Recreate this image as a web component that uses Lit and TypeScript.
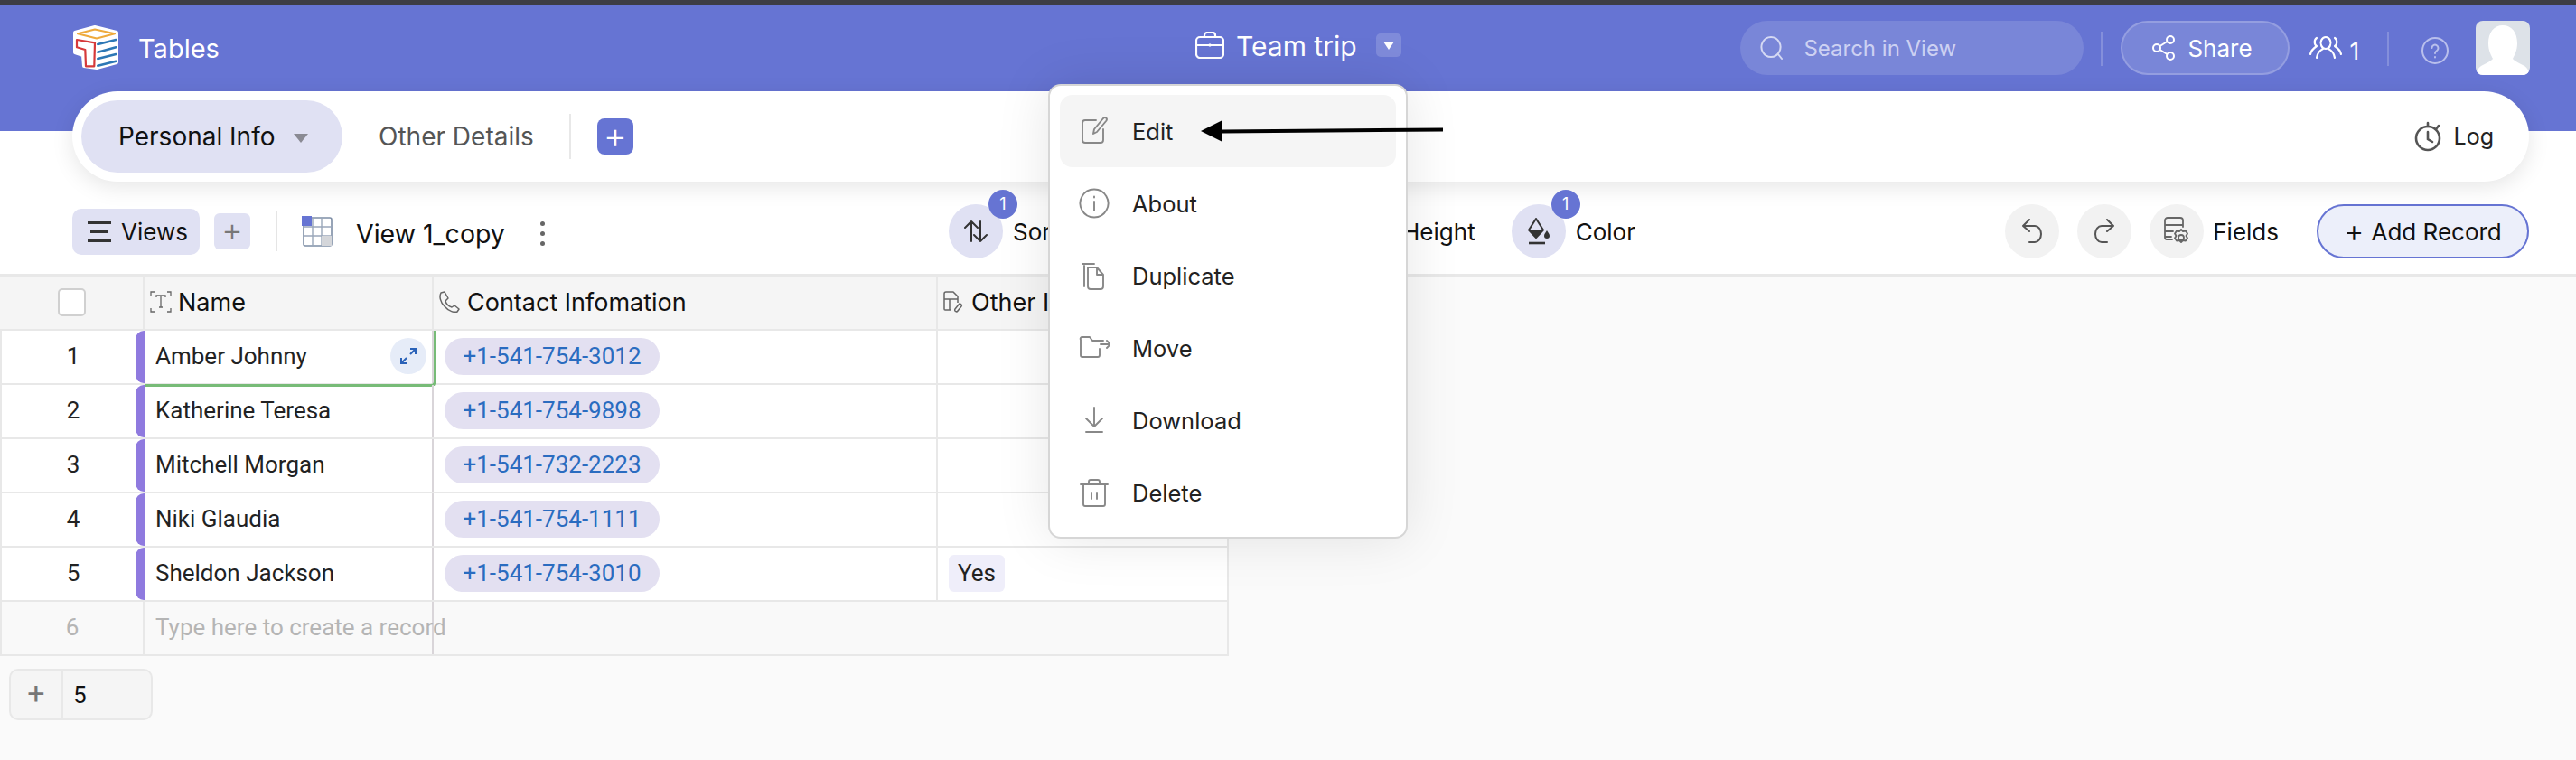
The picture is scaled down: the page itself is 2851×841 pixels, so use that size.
import { LitElement, html, css, svg } from "lit";
import { customElement } from "lit/decorators.js";

const line = (d: string, size = 36) => html`<svg width=${size} height=${size} viewBox="0 0 36 36" fill="none" stroke="currentColor" stroke-width="1.9" stroke-linecap="round" stroke-linejoin="round">${svg`<path d=${d}></path>`}</svg>`;

const MENU = [
  { label: "Edit", d: "M20 6H8a3 3 0 0 0-3 3v19a3 3 0 0 0 3 3h17a3 3 0 0 0 3-3V16M17 21l1-5 10-12c2-2 5 0 3.500 2.500L21 19z", on: true },
  { label: "About", d: "M18 2.500a15.500 15.500 0 1 0 .01 0zM18 10.500v1M18 16v10", on: false },
  { label: "Duplicate", d: "M7 30V7M5 5h13M11 9h10l7 8v13a3 3 0 0 1-3 3H14a3 3 0 0 1-3-3V9zM21 9v8h7", on: false },
  { label: "Move", d: "M3 9a2 2 0 0 1 2-3h8l3 4h12M3 9v17a2 2 0 0 0 2 2h17a2 2 0 0 0 2-2v-7M25 14h11M32 10l4 4-4 4", on: false },
  { label: "Download", d: "M18 4v21M9 16l9 9 9-9M9 31h18", on: false },
  { label: "Delete", d: "M3 9h30M12 8V6a2 2 0 0 1 2-2h8a2 2 0 0 1 2 2v2M6 9v22a2 2 0 0 0 2 2h20a2 2 0 0 0 2-2V9M15 18v7M21 18v7", on: false },
];

const ROWS = [
  { name: "Amber Johnny", phone: "+1-541-754-3012", other: "" },
  { name: "Katherine Teresa", phone: "+1-541-754-9898", other: "" },
  { name: "Mitchell Morgan", phone: "+1-541-732-2223", other: "" },
  { name: "Niki Glaudia", phone: "+1-541-754-1111", other: "" },
  { name: "Sheldon Jackson", phone: "+1-541-754-3010", other: "Yes" },
];

@customElement("app-root")
export class AppRoot extends LitElement {
  private _logo() {
    return html`<svg class="logo" width="52" height="50" viewBox="0 0 52 50" fill="none" stroke-linejoin="round" stroke-linecap="round">
      <path d="M3 8L25 2L49 8V41L27 47L13 45L12 33L3 30Z" fill="#fff" stroke="#fff" stroke-width="4"></path>
      <path d="M6 9.3L25 4.5L47 9.3L27 14.5Z" stroke="#eeaa3c" stroke-width="2.2"></path>
      <path d="M5 16L25 19.3L24.3 45.3L15 45.3L14.3 27L5 24.3Z" stroke="#d6393a" stroke-width="2.2"></path>
      <path d="M28.3 21L48.3 16M28.3 29.7L48.3 24.3M28.3 37L48.3 32M28.3 44.7L48.3 39.7" stroke="#2c77b5" stroke-width="2.6"></path>
    </svg>`;
  }

  private _header() {
    return html`<header class="header">
      <div class="brand">${this._logo()}<span>Tables</span></div>
      <div class="title">
        <svg width="32" height="30" viewBox="0 0 32 30" fill="none" stroke="#fff" stroke-width="2.2" stroke-linejoin="round">
          <rect x="1" y="6" width="30" height="23" rx="4"></rect>
          <path d="M10 6V4a3 3 0 0 1 3-3h6a3 3 0 0 1 3 3v2M1 15h30M16 13.5v3"></path>
        </svg>
        <span>Team trip</span>
        <div class="title-caret"><i></i></div>
      </div>
      <div class="head-right">
        <div class="search">
          <svg width="26" height="28" viewBox="0 0 26 28" fill="none" stroke="#d5d9f3" stroke-width="2" stroke-linecap="round">
            <path d="M12 2a10.5 11 0 1 0 .01 0zM20 21l4 5"></path>
          </svg>
          <span>Search in View</span>
        </div>
        <div class="vline"></div>
        <div class="share">
          <svg width="26" height="28" viewBox="0 0 26 28" fill="none" stroke="#fff" stroke-width="2">
            <circle cx="5" cy="14" r="4"></circle><circle cx="20" cy="5" r="4"></circle><circle cx="20" cy="23" r="4"></circle>
            <path d="M8.5 12l8-5M8.5 16l8 5"></path>
          </svg>
          <span>Share</span>
        </div>
        <div class="people">
          <svg width="38" height="30" viewBox="0 0 38 30" fill="none" stroke="#fff" stroke-width="2.2" stroke-linecap="round" stroke-linejoin="round">
            <path d="M19 3a5.5 6.5 0 1 0 .01 0zM9 26c1-7 5-9 7-10M29 26c-1-7-5-9-7-10M9 4a4 5 0 0 0 0 9c-3 2-6 4-7 9M29 4a4 5 0 0 1 0 9c3 2 6 4 7 9"></path>
          </svg>
          <span>1</span>
        </div>
        <div class="vline gap-line"></div>
        <svg class="help" width="30" height="30" viewBox="0 0 30 30" fill="none" stroke="#b9bfec" stroke-width="2" stroke-linecap="round">
          <circle cx="15" cy="15" r="14"></circle>
          <path d="M11.5 12a3.5 3.5 0 1 1 5.500 3c-1.500 1-2 1.500-2 3M15 22v.5"></path>
        </svg>
        <div class="avatar">
          <svg width="60" height="60" viewBox="0 0 60 60" fill="#fff">
            <path d="M30 5c10 0 16 8 16 20 0 8-3 13-5 17 2 3 8 5 13 8 3 2 5 5 6 10H0c1-5 3-8 6-10 5-3 11-5 13-8-2-4-5-9-5-17C14 13 20 5 30 5z"></path>
          </svg>
        </div>
      </div>
    </header>`;
  }

  private _tabs() {
    return html`<nav class="tabs">
      <div class="tab active"><span>Personal Info</span><i class="caret"></i></div>
      <div class="tab">Other Details</div>
      <div class="vline tab-line"></div>
      <div class="tab-add">+</div>
      <div class="log">
        <svg width="32" height="34" viewBox="0 0 32 34" fill="none" stroke="#555" stroke-width="2.6" stroke-linecap="round">
          <circle cx="15" cy="19" r="13"></circle>
          <path d="M15 12v8l5 3M15 2v4M27 5l-3 4"></path>
        </svg>
        <span>Log</span>
      </div>
    </nav>`;
  }

  private _toolbar() {
    return html`<div class="toolbar">
      <div class="tool-left">
        <div class="views"><span class="burger"><i></i><i></i><i></i></span><span>Views</span></div>
        <div class="view-add">+</div>
        <div class="vline view-line"></div>
        <svg class="grid-icon" width="34" height="34" viewBox="0 0 34 34" fill="none">
          <rect x="2" y="2" width="31" height="31" rx="2" stroke="#7e8ea6" stroke-width="1.6"></rect>
          <path d="M2 12h31M2 22h31M12 2v31M22 2v31" stroke="#9aa7ba" stroke-width="1.4"></path>
          <rect x="22" y="22" width="11" height="11" fill="#d4d6da"></rect>
          <rect width="11" height="11" fill="#6674d3"></rect>
        </svg>
        <span class="view-name">View 1_copy</span>
        <span class="dots"><i></i><i></i><i></i></span>
      </div>
      <div class="tool-mid">
        <div class="tool-item">
          <div class="round lilac">
            <svg width="30" height="30" viewBox="0 0 30 30" fill="none" stroke="#333" stroke-width="2" stroke-linecap="round" stroke-linejoin="round">
              <path d="M10 26V4M3 11l7-7 7 7M20 4v22M13 19l7 7 7-7"></path>
            </svg>
            <b class="badge">1</b>
          </div>
          <span>Sort</span>
        </div>
        <div class="tool-item height-item">
          <div class="round lilac"></div>
          <span>Row Height</span>
        </div>
        <div class="tool-item color-item">
          <div class="round lilac">
            <svg width="26" height="30" viewBox="0 0 26 30" fill="none">
              <path d="M10 1L2 13.500L10 22L18 13.500Z" stroke="#333" stroke-width="2" stroke-linejoin="round"></path>
              <path d="M2 13.500H18L10 22Z" fill="#333"></path>
              <path d="M22 14c-1.500 2.500-3 4-3 6a3 3 0 0 0 6 0c0-2-1.500-3.500-3-6z" fill="#333"></path>
              <path d="M2 28h18" stroke="#333" stroke-width="2.6"></path>
            </svg>
            <b class="badge">1</b>
          </div>
          <span>Color</span>
        </div>
      </div>
      <div class="tool-right">
        <div class="round grey">
          <svg width="26" height="30" viewBox="0 0 26 30" fill="none" stroke="#555" stroke-width="2" stroke-linecap="round" stroke-linejoin="round">
            <path d="M10 2L3 9l7 6M3 9h13a7 9 0 0 1 0 18h-6"></path>
          </svg>
        </div>
        <div class="round grey">
          <svg width="26" height="30" viewBox="0 0 26 30" fill="none" stroke="#555" stroke-width="2" stroke-linecap="round" stroke-linejoin="round">
            <path d="M16 2l7 7-7 6M23 9H10a7 9 0 0 0 0 18h6"></path>
          </svg>
        </div>
        <div class="round grey">
          <svg width="30" height="34" viewBox="0 0 30 34" fill="none" stroke="#666" stroke-width="1.8" stroke-linecap="round" stroke-linejoin="round">
            <path d="M10 26H4a2 2 0 0 1-2-2V5a3 3 0 0 1 3-3h14a3 3 0 0 1 3 3v7M2 10h20M2 17h9M2 23h7"></path>
            <circle cx="20" cy="24" r="3"></circle>
            <path d="M20 15l2 2 3-.500 2 3-1.500 2.500 1.500 2.500-2 3-3-.500-2 2-2-2-3 .500-2-3 1.500-2.500-1.500-2.500 2-3 3 .500z"></path>
          </svg>
        </div>
        <span class="fields">Fields</span>
        <div class="add-record"><span class="plus">+</span><span>Add Record</span></div>
      </div>
    </div>`;
  }

  private _table() {
    return html`<div class="table">
      <div class="row head">
        <div class="c-num"><span class="check"></span></div>
        <div class="c-name">
          <svg width="24" height="24" viewBox="0 0 24 24" fill="none" stroke="#666" stroke-width="1.300">
            <path d="M1 5V1h4M19 1h4v4M1 19v4h4M19 23h4v-4M7 7V5h10v2M12 5v13M10 18h4"></path>
          </svg>
          <span>Name</span>
        </div>
        <div class="c-phone">
          <svg width="24" height="24" viewBox="0 0 24 24" fill="none" stroke="#666" stroke-width="1.500" stroke-linejoin="round">
            <path d="M3 2l4-1 4 7-3 3c1 4 4 6 7 7l3-2 5 4-2 3c-3 1-9 0-14-6C2 12 1 6 3 2z"></path>
          </svg>
          <span>Contact Infomation</span>
        </div>
        <div class="c-other">
          <svg width="22" height="24" viewBox="0 0 22 24" fill="none" stroke="#666" stroke-width="1.500" stroke-linejoin="round">
            <path d="M8 21H2a1 1 0 0 1-1-1V3a2 2 0 0 1 2-2h8l5 5v7M1 9h15M7 9v12M17 15l-4 5a1.500 1.500 0 0 0 3 2l4-5a1.500 1.500 0 0 0-3-2z"></path>
          </svg>
          <span>Other Info</span>
        </div>
      </div>
      ${ROWS.map((r, i) => html`
        <div class="row">
          <div class="c-num"><span>${i + 1}</span><i class="bar"></i></div>
          <div class="c-name">
            <span>${r.name}</span>
            ${i === 0 ? html`<div class="expand">
              <svg width="20" height="20" viewBox="0 0 20 20" fill="none" stroke="#2a62b8" stroke-width="2">
                <path d="M12 2h6v6M18 2l-6 6M2 12v6h6M2 18l6-6"></path>
              </svg>
            </div><i class="selected"></i>` : ""}
          </div>
          <div class="c-phone"><span class="chip">${r.phone}</span></div>
          <div class="c-other">${r.other ? html`<span class="tag">${r.other}</span>` : ""}</div>
        </div>
      `)}
      <div class="row new">
        <div class="c-num"><span>6</span></div>
        <div class="c-name"><span>Type here to create a record</span></div>
        <div class="c-phone"></div>
        <div class="c-other"></div>
      </div>
    </div>`;
  }

  private _menu() {
    return html`<div class="menu">
      ${MENU.map((m) => html`<div class="menu-item ${m.on ? "on" : ""}">
        <span class="menu-icon">${line(m.d)}</span><span>${m.label}</span>
      </div>`)}
    </div>
    <svg class="arrow" width="270" height="26" viewBox="0 0 270 26">
      <path d="M24 11.500L268 9.500V13.500L24 15.500Z" fill="#000"></path>
      <path d="M0 13L24 1V25Z" fill="#000"></path>
    </svg>`;
  }

  render() {
    return html`
      <div class="top">
        ${this._header()}
        ${this._tabs()}
        ${this._toolbar()}
      </div>
      ${this._table()}
      <div class="counter"><span class="counter-add">+</span><span class="counter-val">5</span></div>
      ${this._menu()}
    `;
  }

  static styles = css`
    :host {
      display: block;
      position: relative;
      min-height: 841px;
      background: #fafafa;
      font-family: Inter, "Liberation Sans", sans-serif;
      color: #111;
      overflow: hidden;
    }

    .vline {
      width: 2px;
      height: 38px;
      background: rgba(255, 255, 255, 0.2);
    }

    /* header */
    .top {
      background: #fff;
      border-bottom: 3px solid #e8e8e8;
      padding-bottom: 17px;
    }

    .header {
      box-sizing: border-box;
      height: 145px;
      border-top: 5px solid #3d3d45;
      background: #6674d3;
      display: grid;
      grid-template-columns: 1243px auto 1fr;
      padding: 18px 51px 0 80px;
      color: #fff;
    }

    .brand {
      display: flex;
      align-items: flex-start;
      gap: 21px;
      font-size: 29px;
      line-height: 62px;
    }

    .logo {
      margin-top: 5px;
    }

    .title {
      display: flex;
      align-items: flex-start;
      gap: 13px;
      font-size: 30px;
      line-height: 56px;
    }

    .title svg {
      margin-top: 12px;
    }

    .title-caret {
      margin: 14px 0 0 8px;
      width: 28px;
      height: 26px;
      border-radius: 5px;
      background: rgba(255, 255, 255, 0.17);
      display: flex;
      align-items: center;
      justify-content: center;
    }

    .title-caret i {
      border: 6px solid transparent;
      border-top: 9px solid #fff;
      border-bottom: 0;
    }

    .head-right {
      display: flex;
      align-items: flex-start;
      justify-content: flex-end;
    }

    .search {
      box-sizing: border-box;
      width: 380px;
      height: 60px;
      border-radius: 30px;
      background: rgba(255, 255, 255, 0.13);
      display: flex;
      align-items: center;
      gap: 22px;
      padding-left: 22px;
      font-size: 24px;
      color: #cdd1f2;
    }

    .head-right .vline {
      margin: 12px 20px 0 19px;
    }

    .share {
      box-sizing: border-box;
      width: 187px;
      height: 60px;
      border-radius: 30px;
      background: rgba(255, 255, 255, 0.13);
      border: 2px solid rgba(255, 255, 255, 0.2);
      display: flex;
      align-items: center;
      gap: 13px;
      padding-left: 33px;
      font-size: 26px;
    }

    .people {
      display: flex;
      align-items: center;
      gap: 7px;
      height: 60px;
      margin-left: 21px;
      font-size: 26px;
    }

    .people span {
      margin-top: 6px;
    }

    .head-right .gap-line {
      margin: 12px 36px 0 31px;
    }

    .help {
      margin-top: 18px;
    }

    .avatar {
      width: 60px;
      height: 60px;
      margin-left: 30px;
      border-radius: 8px;
      background: #dde2e8;
      overflow: hidden;
    }

    /* tabs */
    .tabs {
      box-sizing: border-box;
      height: 100px;
      margin: -44px 52px 0 80px;
      padding: 10px 39px 10px 10px;
      border-radius: 50px;
      background: #fff;
      box-shadow: 0 6px 24px rgba(0, 0, 0, 0.1);
      display: flex;
      align-items: center;
      font-size: 28px;
      position: relative;
    }

    .tab {
      color: #555;
      padding: 0 40px;
    }

    .tab.active {
      box-sizing: border-box;
      width: 289px;
      height: 80px;
      border-radius: 40px;
      padding: 0 0 0 41px;
      background: #e0e1f3;
      color: #111;
      display: flex;
      align-items: center;
      gap: 21px;
    }

    .caret {
      border: 8px solid transparent;
      border-top: 10px solid #8a8a93;
      border-bottom: 0;
      margin-top: 4px;
    }

    .tabs .tab-line {
      height: 50px;
      background: #e8e8e8;
      margin-left: -1px;
    }

    .tab-add {
      margin-left: 29px;
      width: 40px;
      height: 40px;
      border-radius: 8px;
      background: #6674d3;
      color: #fff;
      font-size: 40px;
      font-weight: 300;
      line-height: 37px;
      text-align: center;
    }

    .log {
      margin-left: auto;
      display: flex;
      align-items: center;
      gap: 12px;
      font-size: 25px;
      color: #222;
    }

    /* toolbar */
    .toolbar {
      display: grid;
      grid-template-columns: 970px auto 1fr;
      height: 60px;
      margin-top: 25px;
      padding: 0 52px 0 80px;
      font-size: 26px;
    }

    .tool-left,
    .tool-mid,
    .tool-right,
    .tool-item,
    .views {
      display: flex;
      align-items: center;
    }

    .views {
      box-sizing: border-box;
      width: 141px;
      height: 51px;
      border-radius: 10px;
      background: #e0e1f3;
      padding-left: 17px;
      gap: 11px;
    }

    .burger {
      display: flex;
      flex-direction: column;
      gap: 7px;
    }

    .burger i {
      display: block;
      width: 26px;
      height: 3px;
      background: #333;
    }

    .burger i:nth-child(2) {
      width: 20px;
      margin-left: 3px;
    }

    .view-add {
      width: 40px;
      height: 40px;
      margin-left: 16px;
      border-radius: 6px;
      background: #e0e1f3;
      color: #777;
      font-size: 36px;
      font-weight: 300;
      line-height: 37px;
      text-align: center;
    }

    .tool-left .view-line {
      height: 44px;
      background: #e5e5e5;
      margin: 0 27px 0 28px;
    }

    .view-name {
      margin-left: 26px;
      margin-top: 4px;
      font-size: 28.5px;
    }

    .dots {
      display: flex;
      flex-direction: column;
      gap: 6px;
      margin-left: 39px;
      margin-top: 4px;
    }

    .dots i {
      display: block;
      width: 5px;
      height: 5px;
      border-radius: 50%;
      background: #666;
    }

    .tool-item {
      gap: 11px;
    }

    .height-item {
      margin-left: 249px;
    }

    .color-item {
      margin-left: 40px;
    }

    .round {
      position: relative;
      width: 60px;
      height: 60px;
      border-radius: 50%;
      display: flex;
      align-items: center;
      justify-content: center;
    }

    .lilac {
      background: #e0e1f3;
    }

    .grey {
      background: #f2f2f2;
      margin-left: 20px;
    }

    .badge {
      position: absolute;
      top: -16px;
      right: -16px;
      width: 32px;
      height: 32px;
      border-radius: 50%;
      background: #6674d3;
      color: #fff;
      font-size: 18px;
      font-weight: 400;
      line-height: 32px;
      text-align: center;
    }

    .tool-right {
      justify-content: flex-end;
    }

    .fields {
      margin-left: 10px;
    }

    .add-record {
      box-sizing: border-box;
      width: 235px;
      height: 60px;
      margin-left: 42px;
      border: 2px solid #6674d3;
      border-radius: 30px;
      background: #eceffa;
      display: flex;
      align-items: center;
      justify-content: center;
      gap: 8px;
    }

    .plus {
      font-size: 34px;
      font-weight: 300;
      line-height: 34px;
    }

    /* table */
    .table {
      width: 1358px;
      font-family: Roboto, "Liberation Sans", sans-serif;
      font-size: 26px;
      color: #222;
      background: #fff;
      border-right: 2px solid #e8e8e8;
    }

    .row {
      box-sizing: border-box;
      display: grid;
      grid-template-columns: 158px 320px 558px 320px;
      height: 60px;
      border-bottom: 2px solid #e8e8e8;
      border-left: 2px solid #e8e8e8;
    }

    .row > div {
      display: flex;
      align-items: center;
      min-width: 0;
      padding-bottom: 2px;
      white-space: nowrap;
    }

    .head {
      grid-template-columns: 160px 320px 558px 320px;
      background: #f5f5f5;
      color: #111;
      font-family: Inter, "Liberation Sans", sans-serif;
      font-size: 27px;
      border-left: 0;
    }

    .c-num {
      justify-content: center;
      position: relative;
    }

    .head .c-num {
      border-right: 2px solid #e8e8e8;
      box-sizing: border-box;
    }

    .check {
      width: 27px;
      height: 27px;
      border: 2px solid #d0d0d0;
      border-radius: 5px;
      background: #fff;
    }

    .bar {
      position: absolute;
      right: 0;
      top: 0;
      bottom: 0;
      width: 10px;
      border-radius: 9px 0 0 9px;
      background: #8f7adf;
    }

    .c-name {
      position: relative;
      padding-left: 12px;
      border-right: 2px solid #d9d5d9;
      box-sizing: border-box;
    }

    .head .c-name {
      padding-left: 6px;
      gap: 7px;
      border-right-color: #e8e8e8;
    }

    .c-phone {
      box-sizing: border-box;
      padding-left: 12px;
      border-right: 2px solid #e8e8e8;
    }

    .head .c-phone {
      padding-left: 5px;
      gap: 8px;
    }

    .new .c-phone {
      border-right: 0;
    }

    .c-other {
      padding-left: 12px;
      overflow: hidden;
    }

    .head .c-other {
      padding-left: 6px;
      gap: 9px;
    }

    .expand {
      margin: 0 6px 0 auto;
      width: 40px;
      height: 40px;
      border-radius: 50%;
      background: #e6ecf8;
      display: flex;
      align-items: center;
      justify-content: center;
    }

    .selected {
      position: absolute;
      inset: 0 -5px -4px 0;
      border-right: 3px solid #77bb77;
      border-bottom: 3px solid #77bb77;
      border-radius: 0 0 6px 0;
    }

    .chip {
      box-sizing: border-box;
      width: 238px;
      height: 41px;
      border-radius: 21px;
      background: #e3e0f1;
      color: #2a6cc0;
      line-height: 41px;
      text-align: center;
    }

    .tag {
      height: 41px;
      padding: 0 10px;
      border-radius: 6px;
      background: #efeefa;
      line-height: 41px;
    }

    .new {
      background: #f9f9f9;
      color: #b5b5b5;
    }

    .new .c-num {
      border-right: 2px solid #e8e8e8;
      box-sizing: border-box;
    }

    /* footer */
    .counter {
      box-sizing: border-box;
      display: flex;
      align-items: center;
      width: 159px;
      height: 57px;
      margin: 14px 0 0 10px;
      border: 2px solid #e8e8e8;
      border-radius: 10px;
      background: #f5f5f5;
      font-family: Roboto, "Liberation Sans", sans-serif;
      font-size: 26px;
    }

    .counter-add {
      box-sizing: border-box;
      width: 58px;
      height: 100%;
      border-right: 2px solid #e8e8e8;
      color: #777;
      font-size: 34px;
      line-height: 50px;
      text-align: center;
    }

    .counter-val {
      margin-left: 11px;
    }

    /* overlay menu */
    .menu {
      box-sizing: border-box;
      position: absolute;
      left: 1160px;
      top: 93px;
      width: 398px;
      height: 503px;
      padding: 10px 11px;
      border: 2px solid #d6d6d6;
      border-radius: 14px;
      background: #fff;
      box-shadow: 0 0 60px rgba(0, 0, 0, 0.1);
      font-size: 25.5px;
      color: #222;
    }

    .menu-item {
      display: flex;
      align-items: center;
      gap: 24px;
      height: 80px;
      padding-left: 20px;
      border-radius: 14px;
    }

    .menu-item.on {
      background: #f5f5f5;
    }

    .menu-icon {
      display: flex;
      color: #888;
    }

    .arrow {
      position: absolute;
      left: 1329px;
      top: 132px;
    }
  `;
}
